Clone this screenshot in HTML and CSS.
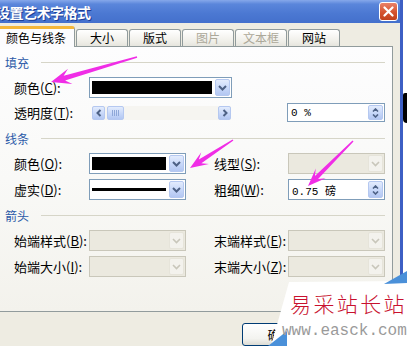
FILE: index.html
```html
<!DOCTYPE html>
<html lang="zh-CN">
<head>
  <meta charset="UTF-8">
  <title>设置艺术字格式</title>
  <link rel="stylesheet" href="styles.css">
</head>
<body>
  <div class="page">
    <div class="win">
      <div class="titlebar">
        <span class="title">设置艺术字格式</span>
        <span class="close">
          <svg width="11" height="11" viewBox="0 0 11 11"><path d="M1.5 1.5l8 8M9.5 1.5l-8 8" stroke="#fff" stroke-width="2.2" stroke-linecap="round"/></svg>
        </span>
      </div>
      <div class="client">
        <div class="tabs">
          <div class="tab active">颜色与线条</div>
          <div class="tab">大小</div>
          <div class="tab">版式</div>
          <div class="tab off">图片</div>
          <div class="tab off">文本框</div>
          <div class="tab">网站</div>
        </div>
        <div class="panel">
          <div class="head"><span>填充</span><i></i></div>
          <div class="row">
            <label>颜色(<u>C</u>):</label>
            <div class="combo wide"><span class="fill"></span><span class="drop"><svg width="9" height="6" viewBox="0 0 9 6"><path d="M1 1l3.5 3.5L8 1" fill="none" stroke="#4d6185" stroke-width="2"/></svg></span></div>
          </div>
          <div class="row tight">
            <label>透明度(<u>T</u>):</label>
            <div class="slider">
              <span class="sbtn"><svg width="6" height="8" viewBox="0 0 6 8"><path d="M4.5 1L1.5 4l3 3" fill="none" stroke="#4d6185" stroke-width="2"/></svg></span>
              <span class="thumb"><i></i></span>
              <span class="sbtn right"><svg width="6" height="8" viewBox="0 0 6 8"><path d="M1.5 1l3 3-3 3" fill="none" stroke="#4d6185" stroke-width="2"/></svg></span>
            </div>
            <span></span>
            <div class="spin short"><span class="val">0 %</span><span class="arrows"><svg width="7" height="4" viewBox="0 0 7 4"><path d="M1 3.5l2.5-2.5L6 3.5" fill="none" stroke="#4d6185" stroke-width="1.6"/></svg><svg width="7" height="4" viewBox="0 0 7 4"><path d="M1 .5l2.5 2.5L6 .5" fill="none" stroke="#4d6185" stroke-width="1.6"/></svg></span></div>
          </div>

          <div class="head"><span>线条</span><i></i></div>
          <div class="row">
            <label>颜色(<u>O</u>):</label>
            <div class="combo"><span class="fill"></span><span class="drop"><svg width="9" height="6" viewBox="0 0 9 6"><path d="M1 1l3.5 3.5L8 1" fill="none" stroke="#4d6185" stroke-width="2"/></svg></span></div>
            <label>线型(<u>S</u>):</label>
            <div class="combo off"><span class="blank"></span><span class="drop"><svg width="9" height="6" viewBox="0 0 9 6"><path d="M1 1l3.5 3.5L8 1" fill="none" stroke="#c8c6ba" stroke-width="1.6"/></svg></span></div>
          </div>
          <div class="row">
            <label>虚实(<u>D</u>):</label>
            <div class="combo"><span class="line"><i></i></span><span class="drop"><svg width="9" height="6" viewBox="0 0 9 6"><path d="M1 1l3.5 3.5L8 1" fill="none" stroke="#4d6185" stroke-width="2"/></svg></span></div>
            <label>粗细(<u>W</u>):</label>
            <div class="spin"><span class="val">0.75 磅</span><span class="arrows"><svg width="7" height="4" viewBox="0 0 7 4"><path d="M1 3.5l2.5-2.5L6 3.5" fill="none" stroke="#4d6185" stroke-width="1.6"/></svg><svg width="7" height="4" viewBox="0 0 7 4"><path d="M1 .5l2.5 2.5L6 .5" fill="none" stroke="#4d6185" stroke-width="1.6"/></svg></span></div>
          </div>

          <div class="head"><span>箭头</span><i></i></div>
          <div class="row">
            <label>始端样式(<u>B</u>):</label>
            <div class="combo off"><span class="blank"></span><span class="drop"><svg width="9" height="6" viewBox="0 0 9 6"><path d="M1 1l3.5 3.5L8 1" fill="none" stroke="#c8c6ba" stroke-width="1.6"/></svg></span></div>
            <label>末端样式(<u>E</u>):</label>
            <div class="combo off"><span class="blank"></span><span class="drop"><svg width="9" height="6" viewBox="0 0 9 6"><path d="M1 1l3.5 3.5L8 1" fill="none" stroke="#c8c6ba" stroke-width="1.6"/></svg></span></div>
          </div>
          <div class="row">
            <label>始端大小(<u>I</u>):</label>
            <div class="combo off"><span class="blank"></span><span class="drop"><svg width="9" height="6" viewBox="0 0 9 6"><path d="M1 1l3.5 3.5L8 1" fill="none" stroke="#c8c6ba" stroke-width="1.6"/></svg></span></div>
            <label>末端大小(<u>Z</u>):</label>
            <div class="combo off"><span class="blank"></span><span class="drop"><svg width="9" height="6" viewBox="0 0 9 6"><path d="M1 1l3.5 3.5L8 1" fill="none" stroke="#c8c6ba" stroke-width="1.6"/></svg></span></div>
          </div>
        </div>
        <div class="buttons">
          <button class="btn">确定</button>
        </div>
      </div>
    </div>
    <div class="art"><i></i></div>
  </div>

  <!-- пометки поверх скриншота -->
  <svg class="marks" width="407" height="346" viewBox="0 0 407 346">
    <polygon points="51,82 72.4,84.1 65.1,80.5 137.2,57.8 136.8,56.2 63.7,75.7 68,68.7"/>
    <polygon points="190,168 208.9,164.1 201.4,163.3 233.4,140.6 232.6,139.4 198.8,159.5 201.3,152.3"/>
    <polygon points="308,186 325.6,178.2 318.1,179.1 353.5,141.5 352.5,140.5 314.9,175.9 315.8,168.4"/>
  </svg>

  <div class="watermark">
    <svg class="wm-bg" width="142" height="76" viewBox="0 0 142 76">
      <polygon points="24,12 142,11 142,76 6,76" fill="#fff"/>
      <polygon points="119,14 142,1 142,13" fill="#4a90d9"/>
      <polygon points="3,76 22,61 22,76" fill="#4a90d9"/>
    </svg>
    <div class="wm-cn">易采站长站</div>
    <div class="wm-url">www.easck.com</div>
  </div>
</body>
</html>
```

FILE: styles.css
```css
* {box-sizing:border-box;}
html,body {margin:0; padding:0;}
body {
  width:407px; height:346px; overflow:hidden;
  background:#fff; position:relative;
  font-family:"Noto Sans CJK SC", "Liberation Sans", sans-serif;
  font-size:13px; color:#000;
}
.page {display:flex; height:346px;}

/* окно XP */
.win {
  flex:none; width:411px; margin-left:-8px;
  border-left:3px solid #3d5fc4; border-right:3px solid #3d5fc4;
  background:#eeece2;
  display:flex; flex-direction:column;
}
.titlebar {
  height:29px; display:flex; align-items:center; justify-content:space-between;
  padding:0 2px 0 1px;
  background:linear-gradient(#86a8ea 0%, #5a86db 18%, #4b78d2 60%, #4470cc 100%);
}
.title {
  color:#fff; font-size:14px; font-weight:700; letter-spacing:-0.5px;
  text-shadow:1px 1px 0 #1c3e96;
}
.close {
  width:19px; height:19px; border:1px solid #fff; border-radius:3px;
  background:linear-gradient(#e9826a, #d5532f 55%, #c2411c);
  display:flex; align-items:center; justify-content:center;
}

.client {display:flex; flex-direction:column;}
.tabs {
  display:flex; align-items:flex-end; gap:1px;
  height:20px; margin:3px 0 0 2px;
}
.tab {
  width:52px; height:17px; line-height:16px; text-align:center;
  font-size:12px;
  border:1px solid #919b9c; border-bottom:none; border-radius:3px 3px 0 0;
  background:linear-gradient(#fff, #f0efe9 70%, #e6e5de);
}
.tab.active {
  width:78px; height:21px; line-height:17px;
  margin-bottom:-1px; position:relative; z-index:1;
  border-top:3px solid #f5b73a;
  background:#fcfcfe;
}
.tab.off {color:#aca899;}

.panel {
  width:396px; margin-left:2px;
  border:1px solid #919b9c;
  background:linear-gradient(#fdfdfe 0%, #f9f9f7 50%, #f3f2ec 100%);
  padding:8px 7px 34px 7px;
}
.head {display:flex; align-items:center; height:14px; margin-top:8px; color:#2c5aa8; font-size:12px;}
.head:first-child {margin-top:0;}
.head i {flex:1; height:1px; background:#d6d5c8; margin-left:12px;}

.row {
  display:grid; grid-template-columns:75px 125px 74px 97px;
  align-items:center; height:21px; margin-top:5px; padding-left:9px;
}
.head + .row {margin-top:8px;}
.row.tight {margin-top:4px;}
.row label {white-space:nowrap;}
.row u {text-decoration-thickness:1px; text-underline-offset:1px;}

.combo {
  display:flex; gap:3px; height:21px; width:97px;
  border:1px solid #7f9db9; background:#fff; padding:1px;
}
.combo.wide {width:143px;}
.combo .fill {flex:1; background:#000; margin:2px 0 2px 1px;}
.combo .line {flex:1; display:flex; align-items:center; padding-left:1px;}
.combo .line i {flex:1; height:3px; background:#000;}
.combo .blank {flex:1;}
.drop {
  width:15px; border:1px solid #b5c8f0; border-radius:2px;
  background:linear-gradient(#e3ecfd, #c4d5f8 60%, #b3c7f2);
  display:flex; align-items:center; justify-content:center;
}
.combo.off {border-color:#c9c7ba; background:#ebe9df;}
.combo.off .drop {background:#f3f2ed; border-color:#e6e4da;}

.slider {
  display:flex; gap:2px; width:139px; height:14px; margin-left:3px;
  background:#f6f5f1;
}
.sbtn, .thumb {
  border:1px solid #b5c8f0; border-radius:2px;
  background:linear-gradient(#e3ecfd, #c4d5f8 60%, #b3c7f2);
  display:flex; align-items:center; justify-content:center;
}
.sbtn {width:13px;}
.sbtn.right {margin-left:auto;}
.thumb {width:17px;}
.thumb i {
  width:7px; height:6px;
  background:repeating-linear-gradient(90deg, #8ea7d8 0 1px, transparent 1px 2px);
}

.spin {
  display:flex; align-items:stretch; height:21px; width:97px;
  border:1px solid #7f9db9; background:#fff; padding:1px;
}
.spin.short {height:19px; margin-left:-1px; width:98px;}
.spin .val {
  flex:1; padding-left:2px; display:flex; align-items:center;
  font-family:"Liberation Mono", "Noto Sans CJK SC", monospace; font-size:11px;
}
.spin .arrows {
  width:15px; border:1px solid #b5c8f0; border-radius:2px;
  background:linear-gradient(#e3ecfd, #c4d5f8 60%, #b3c7f2);
  display:flex; flex-direction:column; align-items:center; justify-content:center; gap:2px;
}

.buttons {display:flex; margin-top:11px; padding-left:247px;}
.btn {
  width:75px; height:23px; padding:0;
  font-family:inherit; font-size:12px; color:#000;
  border:1px solid #003c74; border-radius:3px;
  background:linear-gradient(#fff, #f3f3ef 70%, #dcdbd3);
}

.art {flex:1; background:#fff;}
.art i {display:block; margin-top:93px; height:30px; background:#000; border-radius:4px 0 0 8px;}

.marks {position:absolute; left:0; top:0; pointer-events:none;}
.marks polygon {fill:#f02de6;}

.watermark {
  position:absolute; right:0; bottom:0; width:142px; height:76px;
  padding-top:21px;
}
.wm-bg {position:absolute; left:0; top:0;}
.wm-cn {
  position:relative; margin-left:25px;
  font-size:21px; font-weight:300; line-height:24px; letter-spacing:2.4px; color:#c8102e; white-space:nowrap;
}
.wm-url {
  position:relative; margin:8px 0 0 17px;
  font-family:"Liberation Mono", monospace; font-size:16px; line-height:16px; color:#9a9a9a; white-space:nowrap;
}
```
